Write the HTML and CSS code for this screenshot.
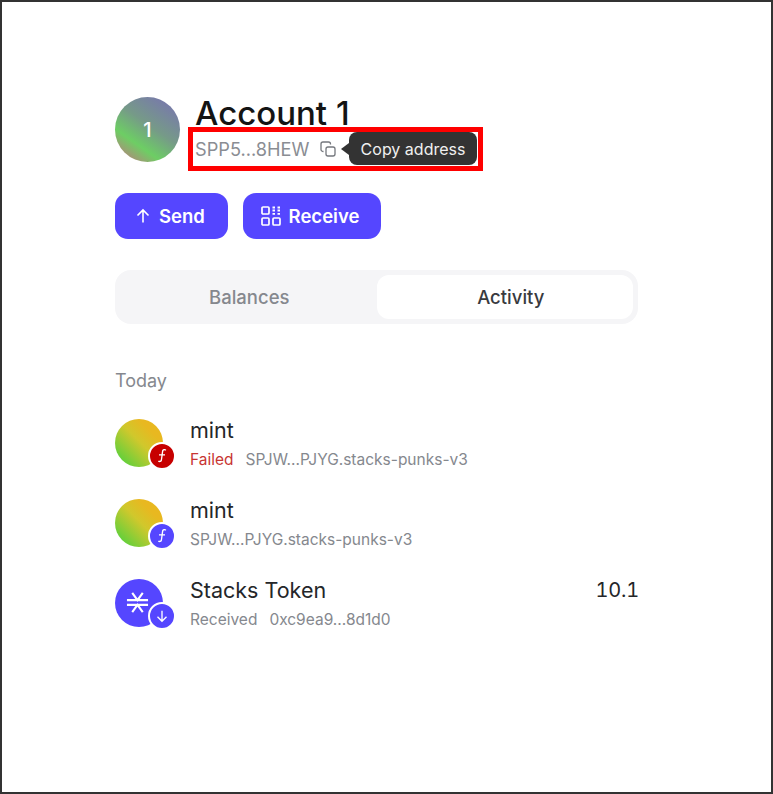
FILE: index.html
```html
<!DOCTYPE html>
<html lang="en">
<head>
<meta charset="utf-8">
<title>Account 1</title>
<link rel="stylesheet" href="styles.css">
</head>
<body>
<main class="frame">
  <div class="content">
    <header class="account">
      <div class="avatar">1</div>
      <div class="identity">
        <h1 class="name">Account 1</h1>
        <div class="address-row">
          <span class="address">SPP5...8HEW</span>
          <svg class="copy" viewBox="0 0 16 16" fill="none" stroke="#74777d" stroke-width="1.3">
            <rect x="6" y="6" width="9" height="9" rx="2"/>
            <path d="M3.5 10.5H3A2 2 0 0 1 1 8.500V3A2 2 0 0 1 3 1h5.500a2 2 0 0 1 2 2v.5"/>
          </svg>
          <span class="tooltip">Copy address</span>
        </div>
      </div>
    </header>
    <div class="actions">
      <button class="btn btn-send">
        <svg class="btn-icon" viewBox="0 0 16 16" fill="none" stroke="#fff" stroke-width="1.600"><path d="M8 14.500V2M2.500 7.500 8 2l5.500 5.500"/></svg>
        Send
      </button>
      <button class="btn btn-receive">
        <svg class="btn-icon-qr" viewBox="0 0 20 20" fill="none" stroke="#fff" stroke-width="1.700">
          <rect x="1" y="1" width="7" height="7" rx="1"/>
          <rect x="1" y="12" width="7" height="7" rx="1"/>
          <rect x="12" y="12" width="7" height="7" rx="1"/>
          <path d="M11.500 1.500h2.500M16.500 1.500H19M11.500 4.500h2.500M16.500 4.500H19M11.500 7.800h2.500M16.500 7.800H19" stroke-width="1.800"/>
        </svg>
        Receive
      </button>
    </div>
    <div class="tabs">
      <div class="tab tab-idle">Balances</div>
      <div class="tab tab-active">Activity</div>
    </div>
    <h2 class="day">Today</h2>
    <ul class="list">
      <li class="item">
        <div class="icon icon-contract">
          <span class="badge badge-failed"><svg viewBox="0 0 24 24" fill="none" stroke="#fff" stroke-width="1.800"><path d="M17 4.500c-.500-1-3-1.500-3.800 0-.800 1.700-1.400 11-2.200 13.500-.500 1.500-2.800 1.700-3.700.5M8 10.500h8"/></svg></span>
        </div>
        <div class="text">
          <div class="title">mint</div>
          <div class="sub"><span class="failed">Failed</span><span>SPJW...PJYG.stacks-punks-v3</span></div>
        </div>
      </li>
      <li class="item">
        <div class="icon icon-contract">
          <span class="badge badge-blue"><svg viewBox="0 0 24 24" fill="none" stroke="#fff" stroke-width="1.800"><path d="M17 4.500c-.500-1-3-1.500-3.800 0-.800 1.700-1.400 11-2.200 13.500-.500 1.500-2.800 1.700-3.700.5M8 10.500h8"/></svg></span>
        </div>
        <div class="text">
          <div class="title">mint</div>
          <div class="sub"><span>SPJW...PJYG.stacks-punks-v3</span></div>
        </div>
      </li>
      <li class="item">
        <div class="icon icon-stx">
          <svg class="stx" viewBox="0 0 24 24" fill="none" stroke="#fff" stroke-width="2.200"><path d="M1 9.500h22M1 14.500h22M6.500 2l5.500 7.500L17.500 2M6.500 22l5.500-7.500L17.500 22"/></svg>
          <span class="badge badge-blue"><svg viewBox="0 0 24 24" fill="none" stroke="#fff" stroke-width="1.800"><path d="M12 5v14M6 13l6 6 6-6"/></svg></span>
        </div>
        <div class="text">
          <div class="title">Stacks Token</div>
          <div class="sub"><span>Received</span><span>0xc9ea9...8d1d0</span></div>
        </div>
        <div class="amount">10.1</div>
      </li>
    </ul>
  </div>
</main>
</body>
</html>
```
FILE: styles.css
```css
* { box-sizing: border-box; }
html, body { margin: 0; padding: 0; background: #fff; }
body { font-family: Inter, "Liberation Sans", sans-serif; color: #242629; }
.frame { width: 773px; height: 794px; border: 2px solid #333; padding: 95px 0 0 113px; }
.content { width: 523px; }
.account { display: flex; gap: 15px; height: 74px; }
.avatar { width: 65px; height: 65px; border-radius: 50%; background: linear-gradient(35deg, #a89278 12%, #6dce64 30%, #769a88 55%, #7878ac 90%); color: #fff; font-size: 20px; font-weight: 500; display: flex; align-items: center; justify-content: center; }
.identity { display: flex; flex-direction: column; }
.name { margin: 0; font-size: 33px; line-height: 32px; font-weight: 500; height: 30px; color: #141414; }
.address-row { margin-left: -7px; width: 295px; height: 44px; border: 5px solid #f00; display: flex; align-items: center; padding-left: 2px; color: #8a8d93; font-size: 18.200px; }
.address { width: 125px; white-space: nowrap; }
.copy { width: 16px; height: 16px; }
.tooltip { position: relative; margin-left: 13px; width: 128px; height: 33px; margin-top: -1px; background: #333; color: #f0f0f0; border-radius: 8px; font-size: 16px; display: flex; align-items: center; justify-content: center; white-space: nowrap; }
.tooltip::before { content: ""; position: absolute; left: -8px; top: 11px; border-style: solid; border-width: 6px 8px 6px 0; border-color: transparent #333 transparent transparent; }
.actions { display: flex; gap: 15px; margin-top: 22px; }
.btn { height: 46px; border: 0; border-radius: 13px; background: #5546ff; color: #fff; font: 600 18.500px Inter, sans-serif; display: flex; align-items: center; justify-content: center; gap: 8px; padding: 0; }
.btn-send { width: 113px; padding-right: 3px; }
.btn-receive { width: 138px; padding-right: 4px; }
.btn-icon { width: 16px; height: 16px; }
.btn-icon-qr { width: 20px; height: 20px; }
.tabs { margin-top: 31px; height: 54px; background: #f5f5f7; border-radius: 16px; padding: 5px; display: grid; grid-template-columns: 1fr 1fr; }
.tab { display: flex; align-items: center; justify-content: center; border-radius: 12px; font-size: 18.500px; font-weight: 500; color: #85888e; }
.tab-idle { padding-left: 2px; }
.tab-active { background: #fff; color: #383a3e; padding-left: 12px; }
.day { margin: 46px 0 0; font-size: 18px; line-height: 22px; font-weight: 400; color: #85888e; }
.list { list-style: none; margin: 0; padding: 27px 0 0; display: flex; flex-direction: column; gap: 32px; }
.item { display: flex; height: 48px; gap: 27px; }
.icon { position: relative; width: 48px; height: 48px; flex: none; border-radius: 50%; }
.icon-contract { background: linear-gradient(45deg, #5ed03c 12%, #d0c82c 52%, #e8b820 75%); }
.icon-stx { background: #5546ff; display: flex; align-items: center; justify-content: center; }
.stx { width: 23px; height: 23px; margin: -2px 0 0 -4px; }
.badge { position: absolute; left: 33px; top: 23px; width: 28px; height: 28px; border-radius: 50%; border: 2px solid #fff; display: flex; align-items: center; justify-content: center; }
.badge svg { width: 18px; height: 18px; }
.badge-failed { background: #c70000; }
.badge-blue { background: #5546ff; }
.text { flex: 1; display: flex; flex-direction: column; }
.title { font-size: 21.500px; line-height: 24px; margin-top: -1px; }
.sub { display: flex; gap: 12px; margin-top: 8px; font-size: 15.500px; line-height: 20px; color: #85888e; }
.failed { color: #c83532; }
.amount { font-size: 20px; line-height: 24px; margin: -1px -1px 0 0; letter-spacing: -.2px; font-variant-numeric: tabular-nums; }
```
